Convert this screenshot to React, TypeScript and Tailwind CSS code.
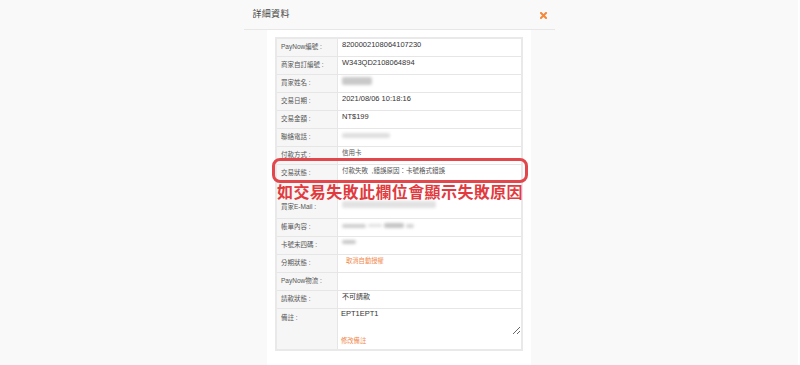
import React from "react";

const font = "font-['Liberation_Sans','Noto_Sans_CJK_TC',sans-serif]";

const Blur = ({ className }: { className: string }) => (
  <div className={`rounded-[2px] blur-[1.5px] ${className}`} />
);

type Row = {
  label: string;
  value?: React.ReactNode;
  rowClass?: string;
  labelClass?: string;
};

const rows: Row[] = [
  { label: "PayNow編號 :", value: <span className="text-[7.5px] text-[#333]">8200002108064107230</span> },
  { label: "商家自訂編號 :", value: <span className="text-[7.5px] text-[#333]">W343QD2108064894</span> },
  { label: "買家姓名 :", value: <Blur className="mt-[1px] h-[8px] w-[30px] bg-[#c9c9c9]" /> },
  { label: "交易日期 :", value: <span className="text-[7.5px] text-[#333]">2021/08/06 10:18:16</span> },
  { label: "交易金額 :", value: <span className="text-[7.5px] text-[#333]">NT$199</span> },
  { label: "聯絡電話 :", value: <Blur className="mt-[3px] h-[5px] w-[48px] bg-[#dedede]" /> },
  { label: "付款方式 :", value: <span className="text-[6.5px] text-[#555]">信用卡</span> },
  {
    label: "交易狀態 :",
    value: <span className="text-[6.5px] text-[#555]">付款失敗&nbsp;&nbsp;,錯誤原因：卡號格式錯誤</span>,
  },
  {
    label: "買家E-Mail :",
    rowClass: "h-[36px]",
    labelClass: "items-end pb-[8px]",
    value: <Blur className="mt-[17px] h-[7px] w-[94px] bg-[#e2e2e2]" />,
  },
  {
    label: "帳單內容 :",
    value: (
      <div className="mt-[3px] flex items-center gap-[2px]">
        <Blur className="h-[4px] w-[24px] bg-[#cfcfcf]" />
        <Blur className="h-[3px] w-[14px] bg-[#e0e0e0]" />
        <Blur className="h-[5px] w-[20px] bg-[#c4c4c4]" />
        <Blur className="h-[4px] w-[8px] bg-[#d4d4d4]" />
      </div>
    ),
  },
  { label: "卡號末四碼 :", value: <Blur className="mt-[2px] h-[4px] w-[14px] bg-[#c8c8c8]" /> },
  {
    label: "分期狀態 :",
    value: <span className="pl-[4px] text-[6.3px] text-[#f0874a]">取消自動授權</span>,
  },
  { label: "PayNow物流 :" },
  { label: "請款狀態 :", value: <span className="text-[7px] text-[#333]">不可請款</span> },
];

export default function App() {
  return (
    <div className={`relative flex h-[365px] w-[800px] justify-center overflow-hidden border-r-2 border-white bg-[#f9f9f9] ${font}`}>
      <div className="flex w-[311px] flex-col">
        {/* header */}
        <div className="flex h-[30px] shrink-0 items-center justify-between border-b border-[#e7e7e7] pl-[9px] pr-[8px]">
          <span className="text-[9px] tracking-[0.3px] text-[#444]">詳細資料</span>
          <svg width="7" height="7" viewBox="0 0 7 7" className="mt-[1px]">
            <path d="M1 1 L6 6 M6 1 L1 6" stroke="#f5883a" strokeWidth="2" strokeLinecap="square" />
          </svg>
        </div>

        {/* body */}
        <div className="mx-auto w-[264px] flex-1 bg-white px-[8px] pt-[7px]">
          <div className="border-2 border-[#e9e9e9]">
            {rows.map((r, i) => (
              <div
                key={i}
                className={`grid grid-cols-[61px_1fr] overflow-hidden border-b border-[#e6e6e6] ${r.rowClass ?? "h-[18px]"}`}
              >
                <div
                  className={`flex overflow-hidden border-r border-[#e6e6e6] bg-[#f6f6f6] pl-[4px] text-[6.5px] leading-none text-[#555] ${r.labelClass ?? "items-center"}`}
                >
                  {r.label}
                </div>
                <div className="overflow-hidden pl-[4px] pt-[1px] text-[7.5px] leading-[1.2]">{r.value}</div>
              </div>
            ))}
            <div className="grid h-[40px] grid-cols-[61px_1fr] overflow-hidden">
              <div className="border-r border-[#e6e6e6] bg-[#f6f6f6] pl-[4px] pt-[6px] text-[6.5px] leading-none text-[#555]">
                備註 :
              </div>
              <div className="flex flex-col pl-[2px] text-[7.5px] leading-[1.2]">
                <textarea
                  readOnly
                  defaultValue="EPT1EPT1"
                  className="h-[26px] w-full resize-y border-none bg-transparent p-0 pl-[1px] text-[7.5px] leading-[1.3] text-[#333] outline-none"
                />
                <span className="mt-[2px] pl-[1px] text-[6.3px] text-[#f0874a]">修改備註</span>
              </div>
            </div>
          </div>
        </div>
      </div>

      {/* annotation overlay */}
      <div className="absolute left-[272px] top-[158px] h-[25px] w-[256px] rounded-[8px] border-[3px] border-[#e2474b]" />
      <div className="absolute left-[277px] top-[182px] text-[16px] font-bold leading-[19px] tracking-[0.4px] text-[#e23b3f] font-['Noto_Sans_CJK_TC',sans-serif]">
        如交易失敗此欄位會顯示失敗原因
      </div>
    </div>
  );
}
